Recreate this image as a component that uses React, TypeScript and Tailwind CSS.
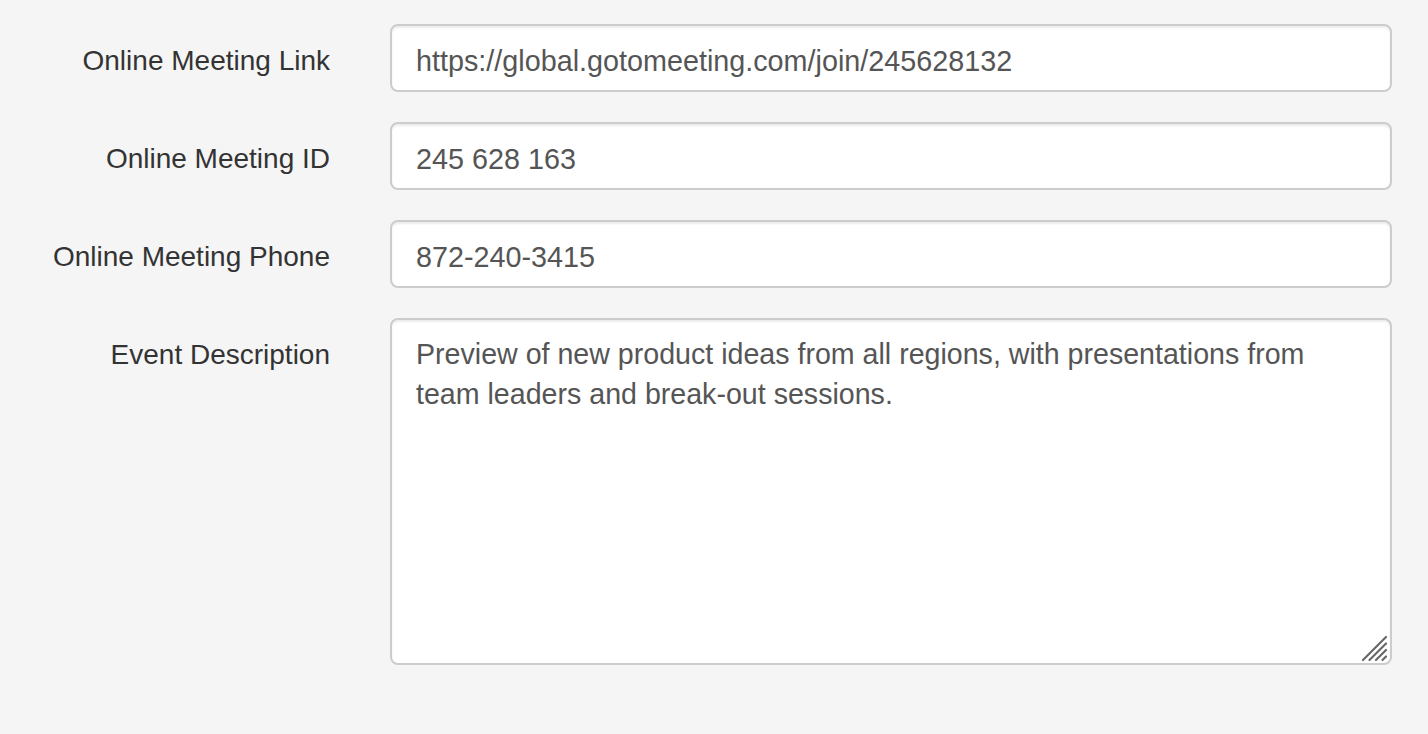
import React from "react";

const inputCls =
  "block w-full h-[68px] px-[24px] pt-[15px] pb-[9px] bg-white border-2 border-[#cccccc] rounded-[8px] shadow-[inset_0_2px_2px_rgba(0,0,0,0.075)] text-[28.75px] leading-[40px] text-[#555555] outline-none";

function Row({ label, children }: { label: string; children: React.ReactNode }) {
  return (
    <div className="grid grid-cols-[330px_1fr] gap-x-[60px]">
      <label className="block text-right pt-[17px] text-[28px] leading-[40px] text-[#333333]">
        {label}
      </label>
      <div>{children}</div>
    </div>
  );
}

export default function App() {
  return (
    <div className="w-[1428px] h-[734px] bg-[#f5f5f5] pt-[24px] pr-[36px] flex flex-col gap-[30px] font-['Liberation_Sans',Arial,Helvetica,sans-serif]">
      <Row label="Online Meeting Link">
        <input className={inputCls} defaultValue="https://global.gotomeeting.com/join/245628132" />
      </Row>
      <Row label="Online Meeting ID">
        <input className={inputCls} defaultValue="245 628 163" />
      </Row>
      <Row label="Online Meeting Phone">
        <input className={inputCls} defaultValue="872-240-3415" />
      </Row>
      <Row label="Event Description">
        <div className="relative">
          <textarea
            className="block w-full h-[347px] pl-[24px] pr-[30px] pt-[14px] pb-[12px] bg-white border-2 border-[#cccccc] rounded-[8px] shadow-[inset_0_2px_2px_rgba(0,0,0,0.075)] text-[28.6px] leading-[40px] text-[#555555] outline-none resize-none"
            defaultValue="Preview of new product ideas from all regions, with presentations from team leaders and break-out sessions."
          />
          <svg className="absolute right-[4px] bottom-[3px]" width="27" height="27" viewBox="0 0 27 27">
            <g stroke="#666666" strokeWidth="2.2" strokeLinecap="round">
              <line x1="2" y1="25" x2="25" y2="2" />
              <line x1="8.5" y1="25" x2="25" y2="8.5" />
              <line x1="15" y1="25" x2="25" y2="15" />
              <line x1="21.5" y1="25" x2="25" y2="21.5" />
            </g>
          </svg>
        </div>
      </Row>
    </div>
  );
}
